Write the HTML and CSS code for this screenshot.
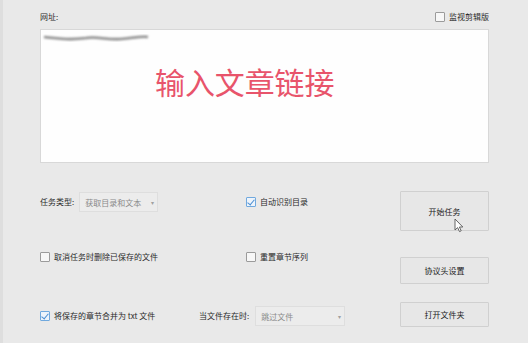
FILE: index.html
```html
<!DOCTYPE html>
<html lang="zh">
<head>
<meta charset="utf-8">
<title>任务</title>
<link rel="stylesheet" href="styles.css">
</head>
<body>
<div class="app">
  <div class="top">
    <span class="label">网址:</span>
    <label class="check"><span class="box"></span><span>监视剪辑版</span></label>
  </div>
  <div class="input">
    <svg class="scribble" width="110" height="10" viewBox="0 0 110 10">
      <defs><filter id="b" x="-10%" y="-100%" width="120%" height="300%"><feGaussianBlur stdDeviation="0.9"/></filter></defs>
      <path d="M3 4 C 20 6, 30 7, 45 5 C 55 3, 65 7, 80 6 C 92 5, 100 3, 107 4" stroke="#8d8d8d" stroke-width="2.6" fill="none" filter="url(#b)"/>
    </svg>
    <div class="placeholder">输入文章链接</div>
  </div>
  <div class="controls">
    <div class="opts">
      <div class="row row-1">
        <div class="cell">
          <span class="label">任务类型:</span>
          <div class="select sel-type"><span>获取目录和文本</span><span class="arrow">▾</span></div>
        </div>
        <label class="check"><span class="box checked"></span><span>自动识别目录</span></label>
      </div>
      <div class="row row-2">
        <label class="check"><span class="box"></span><span>取消任务时删除已保存的文件</span></label>
        <label class="check"><span class="box"></span><span>重置章节序列</span></label>
      </div>
      <div class="row row-3">
        <label class="check merge"><span class="box checked"></span><span>将保存的章节合并为 txt 文件</span></label>
        <span class="label">当文件存在时:</span>
        <div class="select sel-exist"><span>跳过文件</span><span class="arrow">▾</span></div>
      </div>
    </div>
    <div class="buttons">
      <button class="btn btn-start">开始任务</button>
      <button class="btn btn-header">协议头设置</button>
      <button class="btn btn-open">打开文件夹</button>
    </div>
  </div>
  <svg class="cursor" width="10" height="15" viewBox="0 0 10 15">
    <path d="M1 1 L1 12 L3.6 9.6 L5.5 13.6 L7.2 12.8 L5.4 9 L8.8 9 Z" fill="#fff" stroke="#555" stroke-width="0.9" stroke-linejoin="round"/>
  </svg>
</div>
</body>
</html>
```

FILE: styles.css
```css
* { box-sizing: border-box; }
html, body {
  margin: 0;
  padding: 0;
  background: #e9e9e9;
}
body {
  font-family: "Noto Sans CJK SC", "Noto Sans", sans-serif;
  font-size: 8px;
  color: #2a2a2a;
}
.app {
  position: relative;
  width: 528px;
  height: 343px;
  padding: 0 39px 0 37px;
  border-left: 3px solid #dedede;
  overflow: hidden;
}
.top {
  height: 29px;
  padding-top: 5px;
  display: flex;
  align-items: center;
  justify-content: space-between;
}
.label {
  white-space: nowrap;
  line-height: 10px;
}
.check {
  display: flex;
  align-items: center;
  gap: 4px;
  white-space: nowrap;
  line-height: 10px;
}
.box {
  width: 10px;
  height: 10px;
  border: 1px solid #9b9b9b;
  background: #f7f7f7;
  border-radius: 1px;
  flex: none;
  position: relative;
}
.box.checked {
  border-color: #71a9de;
  background: #eef4fb;
}
.box.checked::after {
  content: "";
  position: absolute;
  left: 2px;
  top: 0px;
  width: 3px;
  height: 6px;
  border-right: 1.3px solid #4b8fd3;
  border-bottom: 1.3px solid #4b8fd3;
  transform: rotate(40deg);
}
.input {
  height: 134px;
  background: #fefefe;
  border: 1px solid #d8d8d8;
  padding-top: 3px;
}
.scribble {
  display: block;
}
.placeholder {
  margin-top: 23px;
  margin-left: 114px;
  font-size: 30px;
  line-height: 30px;
  color: #e8546b;
  letter-spacing: -0.1px;
}
.controls {
  display: flex;
}
.opts {
  flex: 1;
  padding-top: 29px;
}
.row {
  height: 20px;
  display: grid;
  grid-template-columns: 206px 1fr;
  align-items: center;
}
.row-2 { margin-top: 35px; }
.row-3 {
  margin-top: 39px;
  display: flex;
}
.cell {
  display: flex;
  align-items: center;
  gap: 5px;
}
.merge { width: 159px; }
.select {
  height: 20px;
  background: #ececec;
  border: 1px solid #dedede;
  color: #8a8a8a;
  display: flex;
  align-items: center;
  justify-content: space-between;
  padding: 0 3px 0 5px;
  white-space: nowrap;
}
.arrow {
  font-size: 6px;
  color: #a0a0a0;
}
.sel-type { width: 79px; }
.sel-exist { width: 90px; margin-left: 6px; }
.buttons {
  width: 89px;
  display: flex;
  flex-direction: column;
  padding-top: 28px;
}
.btn {
  font-family: inherit;
  font-size: 8px;
  color: #222;
  background: #e7e7e7;
  border: 1px solid #d0d0d0;
  border-radius: 1px;
  padding: 0;
  width: 89px;
}
.btn-start { height: 40px; }
.btn-header { height: 27px; margin-top: 26px; }
.btn-open { height: 25px; margin-top: 18px; }
.cursor {
  position: absolute;
  left: 451px;
  top: 218px;
}
```
